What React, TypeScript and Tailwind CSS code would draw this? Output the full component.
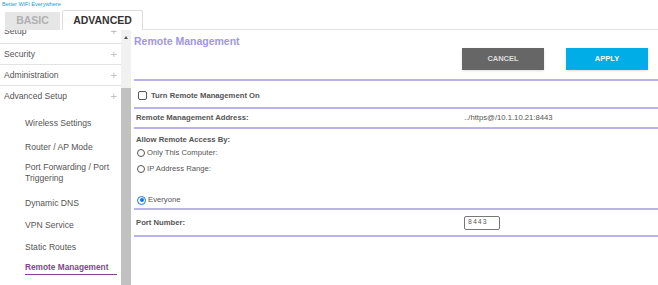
export default function App() {
  const sub = [
    { label: "Wireless Settings", mt: "mt-[11px]" },
    { label: "Router / AP Mode", mt: "mt-[13px]" },
    { label: "Port Forwarding / Port Triggering", mt: "mt-[9px]" },
    { label: "Dynamic DNS", mt: "mt-[14px]" },
    { label: "VPN Service", mt: "mt-[11px]" },
    { label: "Static Routes", mt: "mt-[11px]" },
  ];

  return (
    <div className="w-[658px] h-[285px] overflow-hidden bg-white font-['Liberation_Sans',Arial,sans-serif] text-[#555]">
      {/* header with tabs */}
      <div className="relative h-[30px] flex items-end">
        <div className="absolute left-[2px] top-[1px] text-[5.6px] leading-[7px] text-[#1a9ad6]">
          Better WiFi Everywhere
        </div>
        <div className="ml-[5px] w-[55px] h-[18px] bg-[#e6e6e6] flex items-center justify-center text-[10.5px] font-bold text-[#b0b0b0]">
          BASIC
        </div>
        <div className="ml-[2px] w-[81px] h-[20px] bg-white border border-b-0 border-[#dcdcdc] rounded-t-[2px] flex items-center justify-center text-[10.5px] font-bold text-[#333]">
          ADVANCED
        </div>
        <div className="flex-1 h-[5px] border-b border-[#e3e3e3]" />
      </div>

      <div className="flex h-[255px]">
        {/* sidebar */}
        <div className="w-[121px] overflow-hidden text-[8.6px] leading-[11px]">
          <div className="h-[14px] border-b border-[#e3e3e3] overflow-hidden">
            <div className="-mt-[9px] h-[21px] flex items-center justify-between px-[4px]">
              <span>Setup</span>
              <span className="text-[11px] text-[#c0c0c0]">+</span>
            </div>
          </div>
          {["Security", "Administration"].map((t) => (
            <div key={t} className="h-[21px] border-b border-[#e3e3e3] flex items-center justify-between px-[4px] pt-[1px]">
              <span>{t}</span>
              <span className="text-[11px] text-[#c0c0c0]">+</span>
            </div>
          ))}
          <div className="h-[21px] flex items-center justify-between px-[4px]">
            <span>Advanced Setup</span>
            <span className="text-[11px] text-[#c0c0c0]">+</span>
          </div>
          <div className="pl-[25px] pr-[4px]">
            {sub.map((s) => (
              <div key={s.label} className={s.mt}>
                {s.label}
              </div>
            ))}
            <div className="mt-[9px] pb-[1px] border-b border-[#8b3f9a] text-[#8b3f9a] font-bold text-[8.3px]">
              Remote Management
            </div>
          </div>
        </div>

        {/* scrollbar */}
        <div className="w-[10px] bg-[#f1f1f1] flex flex-col items-center">
          <div className="mt-[6px] w-0 h-0 border-l-[2.5px] border-r-[2.5px] border-b-[3px] border-l-transparent border-r-transparent border-b-[#555]" />
          <div className="mt-[49px] w-full flex-1 bg-[#c1c1c1]" />
        </div>

        {/* content */}
        <div className="flex-1 pl-[3px] text-[7.7px] text-[#555]">
          <div className="h-[17px] pt-[5px] text-[10.5px] leading-[12px] font-bold text-[#a096e6]">
            Remote Management
          </div>
          <div className="mt-[1px] h-[22px] flex justify-end gap-[22px] pr-[10px]">
            <button className="w-[82px] h-[22px] bg-[#666] text-[#ddd] text-[7.5px] font-bold shadow-sm">
              CANCEL
            </button>
            <button className="w-[82px] h-[22px] bg-[#00ade6] text-white text-[7.5px] font-bold shadow-sm">
              APPLY
            </button>
          </div>
          <div className="mt-[9px] h-[2px] bg-[#b9b3ec]" />

          <div className="h-[26px] pt-[3px] flex items-center gap-[4px] pl-[4px]">
            <span className="w-[9px] h-[9px] border border-[#555] rounded-[2px]" />
            <span className="font-bold">Turn Remote Management On</span>
          </div>
          <div className="h-[2px] bg-[#b9b3ec]" />

          <div className="h-[18px] flex items-center pl-[2px]">
            <span className="w-[328px] font-bold">Remote Management Address:</span>
            <span>../https@/10.1.10.21:8443</span>
          </div>
          <div className="h-[2px] bg-[#b9b3ec]" />

          <div className="h-[79px] pl-[2px] leading-[10px]">
            <div className="pt-[6px] font-bold">Allow Remote Access By:</div>
            <div className="mt-[3px] flex items-center gap-[2px] pl-[1px] text-[#555]">
              <span className="w-[8px] h-[8px] rounded-full border border-[#555]" />
              <span>Only This Computer:</span>
            </div>
            <div className="mt-[6px] flex items-center gap-[2px] pl-[1px] text-[#555]">
              <span className="w-[8px] h-[8px] rounded-full border border-[#555]" />
              <span>IP Address Range:</span>
            </div>
            <div className="mt-[21px] flex items-center gap-[2px] pl-[1px] text-[#555]">
              <span className="w-[9px] h-[9px] rounded-full border-[1.5px] border-[#1a73e8] bg-white flex items-center justify-center">
                <span className="w-[4px] h-[4px] rounded-full bg-[#1a73e8]" />
              </span>
              <span>Everyone</span>
            </div>
          </div>
          <div className="h-[2px] bg-[#b9b3ec]" />

          <div className="h-[25px] flex items-center pl-[2px]">
            <span className="w-[328px] font-bold">Port Number:</span>
            <span className="w-[36px] h-[14px] border border-[#777] rounded-[2px] flex items-center pl-[3px] text-[6.5px] tracking-[1px] font-['Liberation_Mono',monospace]">
              8443
            </span>
          </div>
          <div className="h-[2px] bg-[#b9b3ec]" />
        </div>
      </div>
    </div>
  );
}
